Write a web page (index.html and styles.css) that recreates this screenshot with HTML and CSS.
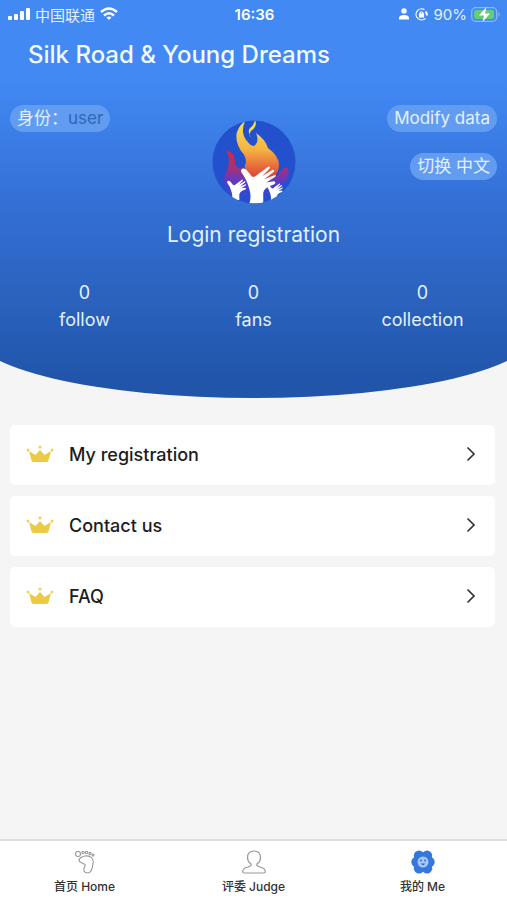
FILE: index.html
```html
<!DOCTYPE html>
<html lang="en">
<head>
  <meta charset="UTF-8">
  <meta name="viewport" content="width=device-width, initial-scale=1">
  <title>Silk Road &amp; Young Dreams</title>
  <link rel="stylesheet" href="styles.css">
</head>
<body>

<svg class="defs" aria-hidden="true">
  <symbol id="crown" viewBox="0 0 28 18">
    <g fill="#f0d35a">
      <circle cx="14" cy="2" r="1.6"/><circle cx="2" cy="5" r="1.5"/><circle cx="26" cy="5" r="1.5"/>
      <path d="M3 6 9.500 10 14 5 18.500 10 25 6 22.500 15.500Q22 17 20 17H8Q6 17 5.500 15.500Z" fill="#edca43"/>
    </g>
  </symbol>
  <symbol id="arrow" viewBox="0 0 10 16">
    <path d="M2 2 8 8 2 14" fill="none" stroke="#333" stroke-width="1.7" stroke-linecap="round"/>
  </symbol>
  <symbol id="hand" viewBox="0 0 34 36">
    <path d="M8 36Q10 29 8 23Q6 14 0 6Q0 1 5 4L10 10Q12 12 15 9L26 1Q28 1 27 3L20 10 30 4Q32 4 31 6L22 13 32 9Q34 9 32 11L24 16 31 15Q34 16 31 18L26 20Q22 22 21 26L21 36Z" fill="#fff"/>
  </symbol>
</svg>

<header class="hero">
  <div class="status">
    <div class="status-left">
      <svg width="22" height="14" viewBox="0 0 22 14" fill="#fff"><rect x="0" y="9" width="4" height="4" rx="1"/><rect x="6" y="7" width="4" height="6" rx="1"/><rect x="12" y="4" width="4" height="9" rx="1"/><rect x="18" y="1" width="4" height="12" rx="1"/></svg>
      <span>中国联通</span>
      <svg width="18" height="14" viewBox="0 0 18 14" fill="none" stroke="#fff" stroke-width="2.400"><path d="M1 5Q9-2 17 5M4 8.500Q9 4 14 8.500"/><path d="M6.500 10.500Q9 8.500 11.500 10.500L9 13Z" fill="#fff" stroke="none"/></svg>
    </div>
    <time>16:36</time>
    <div class="status-right">
      <svg width="10" height="12" viewBox="0 0 10 12" fill="#fff"><circle cx="5" cy="3" r="2.700"/><path d="M0 11.500V10Q0 7 5 7T10 10V11.500Z"/></svg>
      <svg class="lock" width="13" height="13" viewBox="0 0 13 13" fill="none" stroke="#fff" stroke-width="1.200"><path d="M9.500 1.800A5.500 5.500 0 1 0 10.500 10.300"/><path d="M10.500 3.500Q12 5 12 7.500" stroke-width="1.800"/><rect x="4.500" y="6" width="4" height="3" fill="#fff"/><path d="M5 6V5Q6.500 2.500 8 5V6"/></svg>
      <span>90%</span>
      <svg width="30" height="15" viewBox="0 0 30 15"><rect x=".7" y=".7" width="25" height="13.600" rx="4" fill="none" stroke="#8ab9fa" stroke-width="1.300"/><rect x="3" y="3" width="20" height="9" rx="2" fill="#67cc78"/><path d="M27.500 5Q30 7.500 27.500 10Z" fill="#8ab9fa"/><path d="M15.500 0 8 8.500H13L11.500 15 19 6.500H14Z" fill="#fff"/></svg>
    </div>
  </div>

  <h1>Silk Road &amp; Young Dreams</h1>

  <div class="profile">
    <div class="profile-side">
      <span class="pill">身份：<span class="role">user</span></span>
    </div>
    <svg class="avatar" viewBox="0 0 84 84" role="img" aria-label="Flame and hands">
      <defs>
        <clipPath id="round"><circle cx="42" cy="42" r="41.500"/></clipPath>
        <linearGradient id="flame" x1="0" y1="0" x2="0" y2="1"><stop offset="0" stop-color="#f5e34e"/><stop offset=".5" stop-color="#f4b344"/><stop offset="1" stop-color="#df3c35"/></linearGradient>
        <linearGradient id="ember" x1="0" y1="0" x2="0" y2="1"><stop offset="0" stop-color="#d22945"/><stop offset=".35" stop-color="#a93075"/><stop offset=".7" stop-color="#4a3dd8"/><stop offset="1" stop-color="#2350cc"/></linearGradient>
      </defs>
      <g clip-path="url(#round)">
        <rect width="84" height="84" fill="#2350cc"/>
        <path d="M14 30Q24 33 23 43Q24 49 30 48L66 56Q68 49 75 47Q80 56 70 65L58 80H24Q8 68 14 52Q20 41 14 30Z" fill="url(#ember)"/>
        <path d="M33 1Q28 13 35 21Q41 29 44 24Q47 20 44 13Q53 19 56 28Q67 36 67 45Q67 53 60 58L39 58Q30 51 34 42Q34 36 29 31Q18 13 33 1Z" fill="url(#flame)"/>
        <path d="M43 0Q46 6 39 11Q36 15 39 17Q35 12 38 8Q42 5 43 0Z" fill="#f5dc4b"/>
        <use href="#hand" x="29" y="45" width="36" height="39"/>
        <use href="#hand" x="15" y="59" width="20" height="21"/>
        <use href="#hand" x="54" y="63" width="18" height="18"/>
      </g>
    </svg>
    <div class="profile-side right">
      <button class="pill">Modify data</button>
      <button class="pill">切换 中文</button>
    </div>
  </div>

  <a class="login" href="#">Login registration</a>

  <div class="stats">
    <div><b>0</b><span>follow</span></div>
    <div><b>0</b><span>fans</span></div>
    <div><b>0</b><span>collection</span></div>
  </div>
</header>

<main class="menu">
  <a class="item" href="#"><svg class="crown"><use href="#crown"/></svg><span>My registration</span><svg class="arrow"><use href="#arrow"/></svg></a>
  <a class="item" href="#"><svg class="crown"><use href="#crown"/></svg><span>Contact us</span><svg class="arrow"><use href="#arrow"/></svg></a>
  <a class="item" href="#"><svg class="crown"><use href="#crown"/></svg><span>FAQ</span><svg class="arrow"><use href="#arrow"/></svg></a>
</main>

<nav class="tabs">
  <a href="#">
    <svg viewBox="0 0 24 24" fill="none" stroke="#999" stroke-width="1.100"><circle cx="5" cy="4" r="2.500"/><circle cx="10" cy="2.500" r="1.200"/><circle cx="13.500" cy="2.500" r="1.200"/><circle cx="17" cy="3.500" r="1.100"/><circle cx="20" cy="5" r="1"/><path d="M12 6C18 5 21 9 20 14C19 18 19 23 15 23C10 23 10 19 12 16C14 13 6 14 6 10Q7 7 12 6Z"/></svg>
    <span>首页 Home</span>
  </a>
  <a href="#">
    <svg viewBox="0 0 24 24" fill="none" stroke="#999" stroke-width="1.200"><path d="M12 1C7.500 1 5.500 4 5.500 7.500C5.500 10 6.500 12 8.500 13.500C10 15 9 16 6 17C2 18 .7 19 .7 21.500Q.7 23 2.500 23H21.500Q23.300 23 23.300 21.500C23.300 19 22 18 18 17C15 16 14 15 15.500 13.500C17.500 12 18.500 10 18.500 7.500C18.500 4 16.500 1 12 1Z"/></svg>
    <span>评委 Judge</span>
  </a>
  <a href="#">
    <svg viewBox="0 0 24 24"><g fill="#3477dd"><circle cx="8" cy="5.800" r="5.200"/><circle cx="16" cy="5.800" r="5.200"/><circle cx="5.500" cy="12" r="5.200"/><circle cx="18.500" cy="12" r="5.200"/><circle cx="8" cy="18.200" r="5.200"/><circle cx="16" cy="18.200" r="5.200"/></g><circle cx="12" cy="12" r="5.500" fill="#a5c8f8"/><g fill="#2861bd"><circle cx="10" cy="10.500" r=".9"/><circle cx="14" cy="10.500" r=".9"/><path d="M10 13.500H14Q12 17 10 13.500Z"/></g></svg>
    <span>我的 Me</span>
  </a>
</nav>

</body>
</html>
```
FILE: styles.css
```css
* { box-sizing: border-box; }
body {
  margin: 0;
  min-height: 100vh;
  display: flex;
  flex-direction: column;
  background: #f5f5f5;
  color: #1c1c1c;
  font-family: Inter, "Noto Sans CJK SC", sans-serif;
}
a { color: inherit; text-decoration: none; }
svg { flex: none; }
.defs { position: absolute; width: 0; height: 0; }

.hero {
  position: relative;
  overflow: hidden;
  padding-bottom: 65px;
  color: #e2f1ff;
}
/* wide ellipse gives the curved bottom edge */
.hero::before {
  content: "";
  position: absolute;
  z-index: -1;
  inset: 0 -6%;
  border-radius: 0 0 50% 50% / 0 0 67px 67px;
  background: linear-gradient(#4289f4 80px, #3470d6 200px, #2a62bd 300px, #2155aa 380px);
}
.status {
  display: grid;
  grid-template-columns: 1fr auto 1fr;
  align-items: center;
  height: 28px;
  padding: 0 6px 0 8px;
  font-size: 15px;
}
.status-left, .status-right { display: flex; align-items: center; gap: 5px; }
.status-right { justify-content: flex-end; gap: 4px; }
.status-right .lock { margin: 0 2px; }
.status time { font-weight: 600; color: #fff; }
h1 {
  margin: 0;
  padding: 12px 28px;
  font-size: 24px;
  font-weight: 500;
  line-height: 30px;
  color: #f2faff;
}

.profile {
  display: grid;
  grid-template-columns: 1fr 84px 1fr;
  padding: 23px 10px 0;
}
.profile-side { display: flex; flex-direction: column; align-items: flex-start; gap: 21px; }
.profile-side.right { align-items: flex-end; }
.pill {
  height: 27px;
  padding: 0 7px;
  border: 0;
  border-radius: 14px;
  background: #629cf0;
  color: #e2f1ff;
  font: inherit;
  font-size: 17px;
  line-height: 27px;
  white-space: nowrap;
}
.role { color: #2e68b8; }
.avatar { width: 84px; height: 84px; margin-top: 15px; }
.login {
  display: block;
  margin-top: 15px;
  font-size: 21px;
  line-height: 32px;
  text-align: center;
}
.stats {
  display: grid;
  grid-template-columns: repeat(3, 1fr);
  margin-top: 28px;
  font-size: 18px;
  line-height: 27px;
  text-align: center;
}
.stats b, .stats span { display: block; font-weight: 400; }

.menu {
  flex: 1;
  display: flex;
  flex-direction: column;
  gap: 11px;
  padding: 27px 12px 28px 10px;
}
.item {
  display: flex;
  align-items: center;
  height: 60px;
  padding: 0 19px 2px 16px;
  border-radius: 5px;
  background: #fff;
  font-size: 18px;
  font-weight: 500;
}
.item span { flex: 1; margin-left: 15px; }
.crown { width: 28px; height: 18px; }
.arrow { width: 10px; height: 16px; }

.tabs {
  display: grid;
  grid-template-columns: repeat(3, 1fr);
  border-top: 2px solid #dedede;
  background: #fff;
}
.tabs a {
  display: flex;
  flex-direction: column;
  align-items: center;
  gap: 4px;
  padding: 9px 0 5px;
  font-size: 12px;
  font-weight: 500;
  line-height: 17px;
  color: #333;
}
.tabs svg { width: 24px; height: 24px; }
```
